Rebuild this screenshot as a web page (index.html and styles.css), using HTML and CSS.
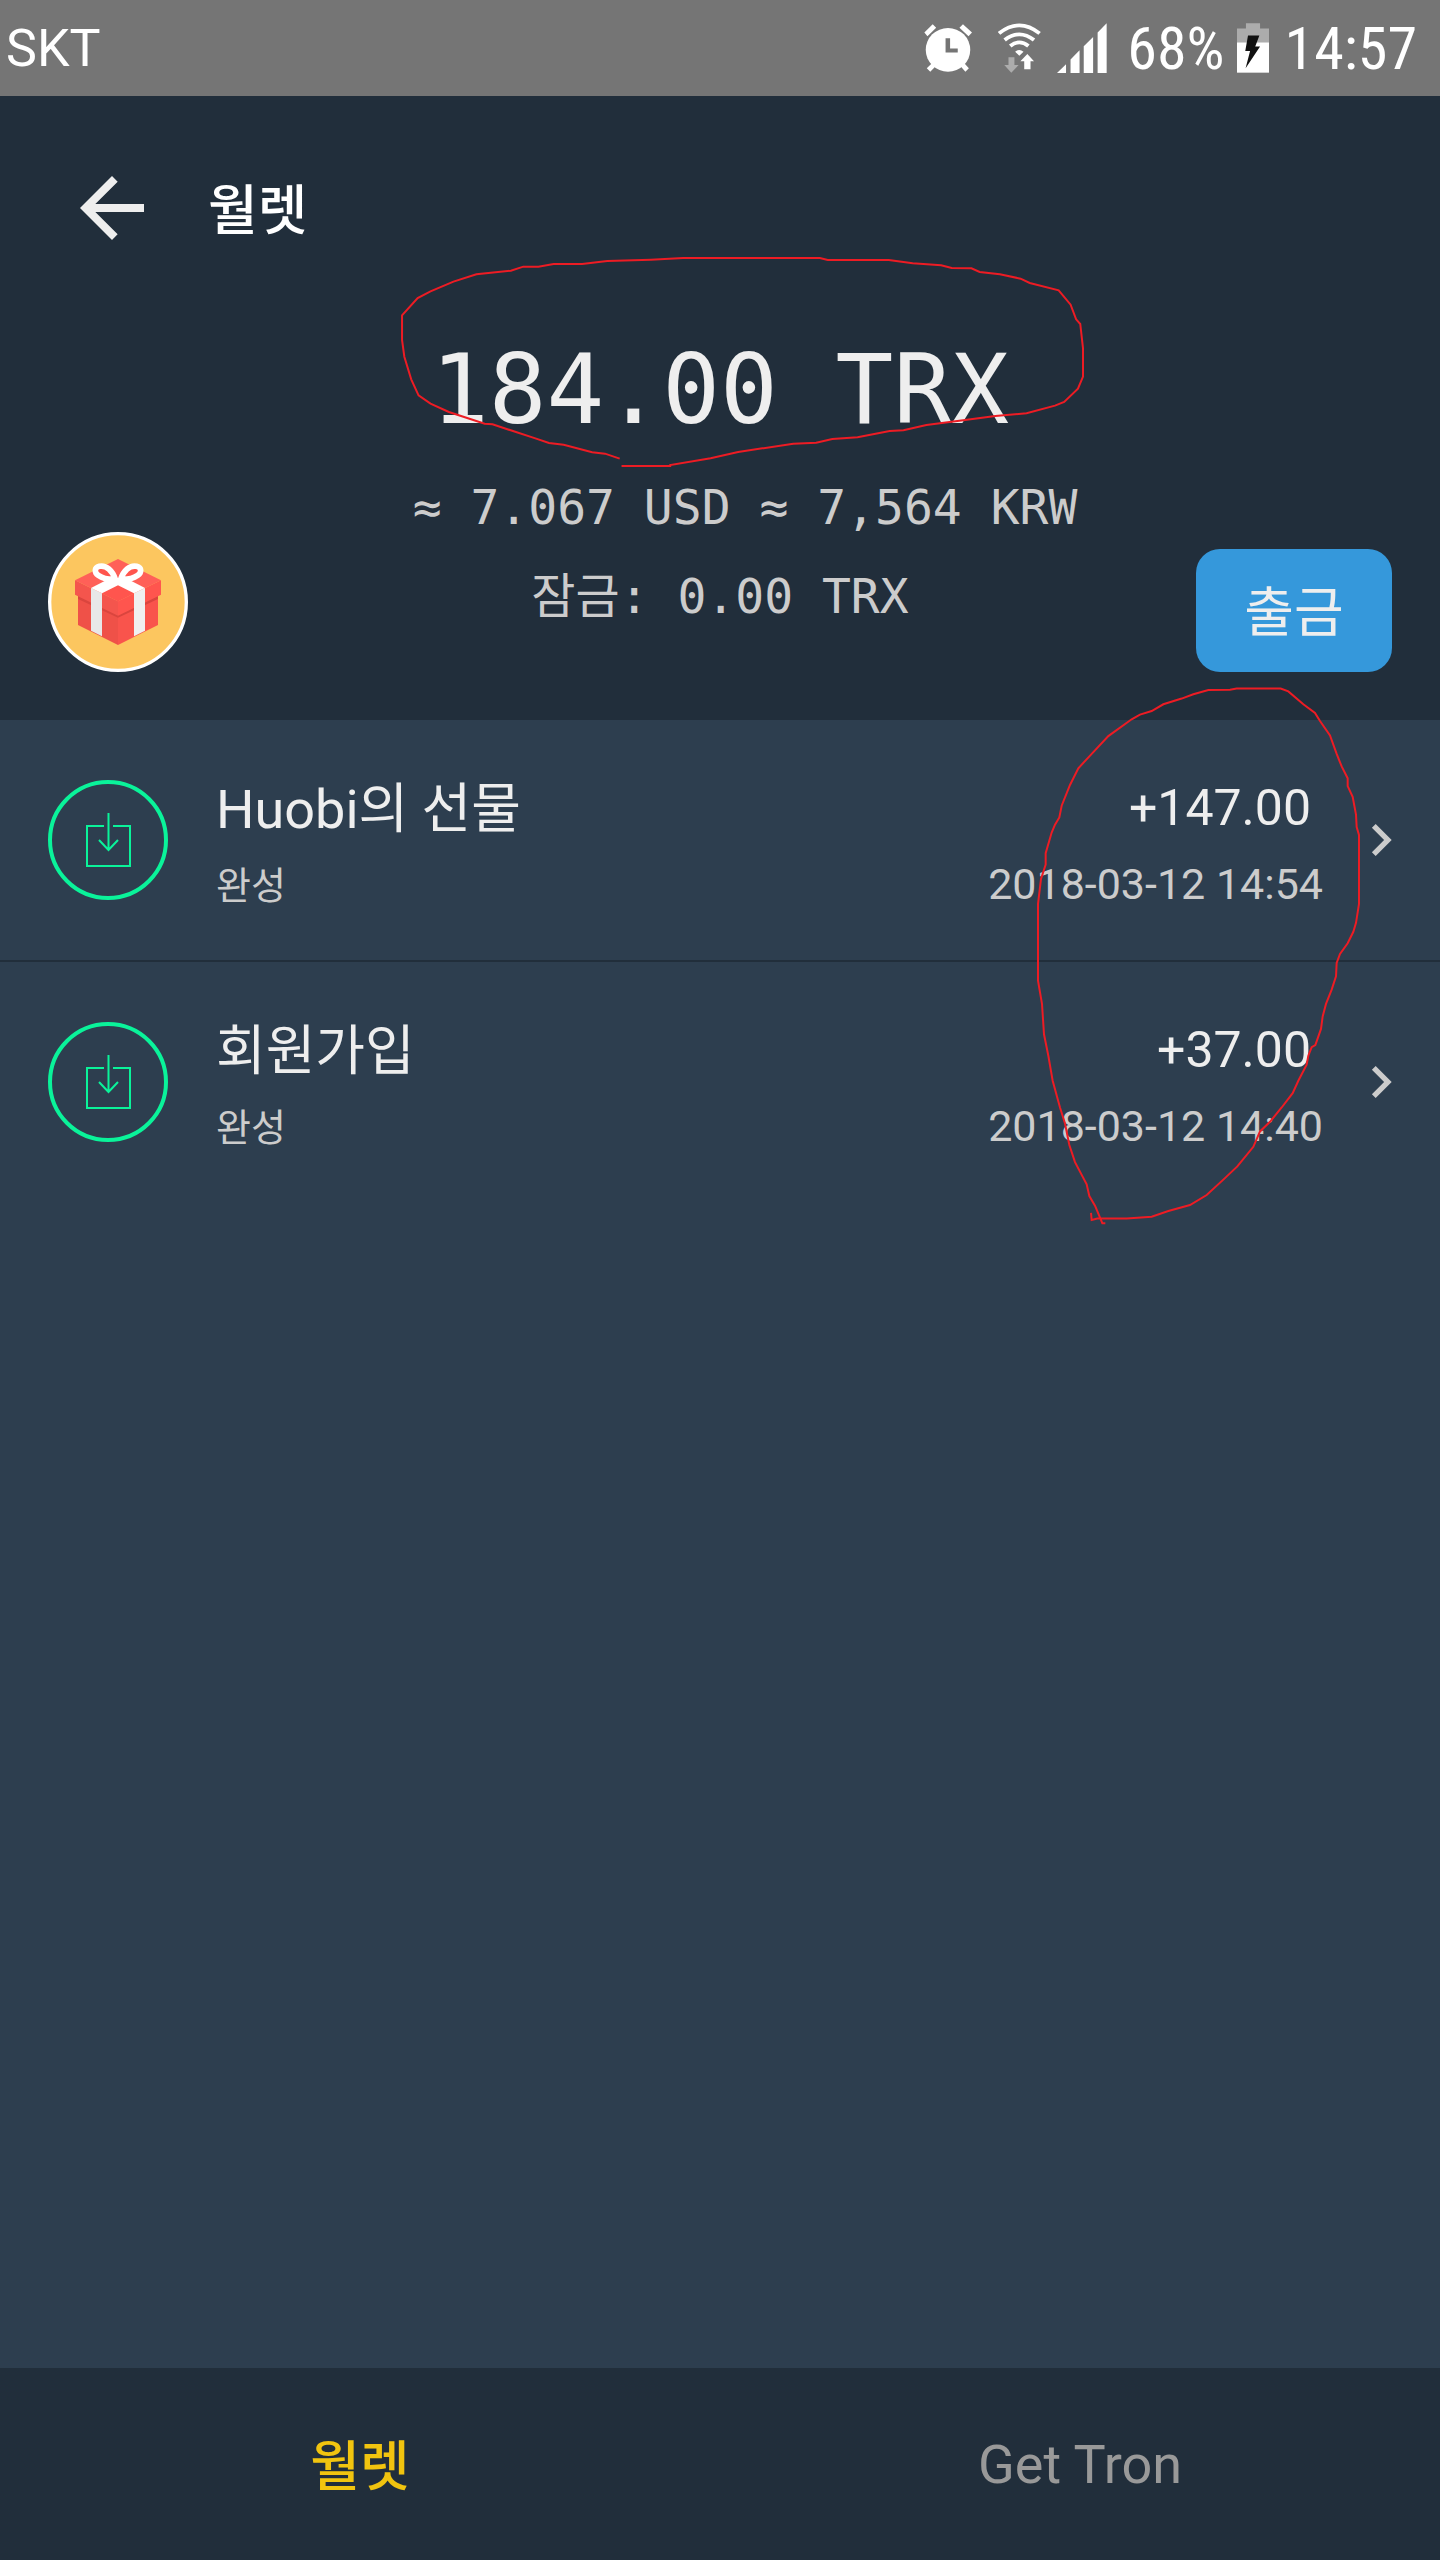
FILE: index.html
```html
<!DOCTYPE html>
<html lang="ko">
<head>
<meta charset="utf-8">
<meta name="viewport" content="width=device-width, initial-scale=1">
<title>월렛</title>
<link rel="stylesheet" href="styles.css">
</head>
<body>
<div class="status-bar">
  <span class="carrier">SKT</span>
  <div class="status-icons">
    <svg class="icon-alarm" viewBox="69 68 138 145" preserveAspectRatio="none" aria-hidden="true">
      <ellipse cx="138" cy="146" rx="64" ry="66" fill="#fff"/>
      <path d="M70 94L94 69L104 79L79 105ZM171 79L181 69L207 94L197 105ZM77 202L94 184L106 192L87 212ZM171 192L183 184L198 202L188 212Z" fill="#fff"/>
      <path d="M131 111H144V142H166V154H131Z" fill="#757575"/>
    </svg>
    <svg class="icon-wifi" viewBox="286 65 123 150" preserveAspectRatio="none" aria-hidden="true">
      <path d="M289 96Q347 48 405 96M305 116Q347 82 389 116M321 134Q347 112 373 134" fill="none" stroke="#fff" stroke-width="11"/>
      <path d="M335 151Q347 141 359 151L347 163ZM370 158L389 180H379V204H361V180H350Z" fill="#fff"/>
      <path d="M316 168H333V191H345L324 214L304 191H316Z" fill="#acacac"/>
    </svg>
    <svg class="icon-signal" viewBox="455 66 144 147" preserveAspectRatio="none" aria-hidden="true">
      <path d="M455 213L481 187V213ZM494 213V173L520 146V213ZM532 213V134L559 107V213ZM572 213V94L598 67V213Z" fill="#fff"/>
    </svg>
    <span class="status-text">68%</span>
    <svg class="icon-battery" viewBox="976 68 93 147" preserveAspectRatio="none" aria-hidden="true">
      <path d="M1002 69H1043V84H1069V125H976V84H1002Z" fill="#acacac"/>
      <path d="M976 125H1069V214H976Z" fill="#fff"/>
      <path d="M1008 105H1041L1029 137H1043L1001 201L1014 150H1000Z" fill="#111"/>
    </svg>
    <span class="status-text">14:57</span>
  </div>
</div>

<header class="wallet-header">
  <div class="toolbar">
    <button class="back" type="button" aria-label="뒤로">
      <svg viewBox="0 0 24 24" aria-hidden="true"><path fill="#eee" d="M20 11H7.83l5.59-5.59L12 4l-8 8 8 8 1.41-1.41L7.83 13H20v-2z"/></svg>
    </button>
    <h1 class="title">월렛</h1>
  </div>
  <p class="balance">184.00 TRX</p>
  <p class="converted">≈ 7.067 USD ≈ 7,564 KRW</p>
  <div class="actions">
    <button class="gift" type="button" aria-label="선물">
      <svg viewBox="54 66 420 420" aria-hidden="true">
        <circle cx="264" cy="276" r="205" fill="#fcc65f" stroke="#fff" stroke-width="10"/>
        <path d="M144 245L264 300V405L144 345Z" fill="#ef5148"/>
        <path d="M384 245L264 300V405L384 345Z" fill="#f9544c"/>
        <path d="M144 256L264 314L384 256V267L264 323L144 267Z" fill="#da453e"/>
        <path d="M264 147L393 211L264 274L135 211Z" fill="#ff6058"/>
        <path d="M135 211L264 274V317L135 254Z" fill="#f4554d"/>
        <path d="M393 211L264 274V317L393 254Z" fill="#ff554e"/>
        <path d="M264 226L312 250L264 274L216 250Z" fill="#ff554e"/>
        <path d="M183 234L216 250V379L183 362Z" fill="#e8e8e8"/>
        <path d="M345 234L312 250V379L345 362Z" fill="#f0f0f0"/>
        <path d="M183 234L240 205H288L345 234L312 250L264 226L216 250Z" fill="#fff"/>
        <path d="M256 208C248 182 228 164 208 169C192 173 193 188 205 196C218 205 238 209 256 208ZM272 208C280 182 300 164 320 169C336 173 335 188 323 196C310 205 290 209 272 208Z" fill="#ff554e" stroke="#fff" stroke-width="17" stroke-linejoin="round"/>
      </svg>
    </button>
    <p class="locked">잠금: 0.00 TRX</p>
    <button class="withdraw" type="button">출금</button>
  </div>
  <svg class="mark mark-balance" viewBox="0 0 1568 1200" preserveAspectRatio="none" aria-hidden="true">
    <path vector-effect="non-scaling-stroke" d="M522 656L490 641L462 637L400 614L368 609L340 596L245 553L228 551L150 516L110 491L84 466L68 418L53 350L48 300V226L82 174L110 154L160 125L210 103L285 92L312 80L345 80L378 72H440L495 63L590 59L660 54H958L975 60H1108L1160 70L1222 76L1245 84L1288 85L1306 96L1350 103L1395 116L1415 129L1478 151L1504 194L1516 238L1525 252L1531 325V410L1520 446L1490 486L1470 497L1408 520L1340 528L1270 541L1190 555L1140 571L1110 573L1040 592L985 597L950 608L900 611L780 636L720 655L632 675V678H526"/>
  </svg>
</header>

<main class="history">
  <ul class="transactions">
    <li>
      <a class="transaction" href="#gift">
        <svg class="deposit" viewBox="0 0 120 120" aria-hidden="true">
          <circle cx="60" cy="60" r="58" stroke-width="4"/>
          <path stroke-width="2" d="M56 46H39V86H82V46H65M60.500 33V70M51 60L60.500 70L70 60"/>
        </svg>
        <span class="details"><span class="name">Huobi의 선물</span><span class="state">완성</span></span>
        <span class="figures"><span class="amount">+147.00</span><time class="date" datetime="2018-03-12T14:54">2018-03-12 14:54</time></span>
        <svg class="chevron" viewBox="0 0 24 24" aria-hidden="true"><path fill="#ccc" d="M10 6L8.590 7.410 13.170 12l-4.580 4.590L10 18l6-6z"/></svg>
      </a>
    </li>
    <li>
      <a class="transaction" href="#signup">
        <svg class="deposit" viewBox="0 0 120 120" aria-hidden="true">
          <circle cx="60" cy="60" r="58" stroke-width="4"/>
          <path stroke-width="2" d="M56 46H39V86H82V46H65M60.500 33V70M51 60L60.500 70L70 60"/>
        </svg>
        <span class="details"><span class="name">회원가입</span><span class="state">완성</span></span>
        <span class="figures"><span class="amount">+37.00</span><time class="date" datetime="2018-03-12T14:40">2018-03-12 14:40</time></span>
        <svg class="chevron" viewBox="0 0 24 24" aria-hidden="true"><path fill="#ccc" d="M10 6L8.590 7.410 13.170 12l-4.580 4.590L10 18l6-6z"/></svg>
      </a>
    </li>
  </ul>
  <svg class="mark mark-history" viewBox="0 0 1440 1568" preserveAspectRatio="none" aria-hidden="true">
    <path vector-effect="non-scaling-stroke" d="M436 1549H427L405 1500L388 1473L380 1440L345 1378L328 1330L315 1270L300 1225L278 1150L265 1080L252 1020L246 935L234 870V655L243 585L257 545V513L275 455L285 433L298 413L305 380L330 322L355 275L400 230L445 185L515 138L540 125L575 115L610 96L665 80L700 68L745 56L810 55L830 52H962L985 60L1030 96L1065 120L1080 143L1110 183L1130 235L1145 270L1163 303V325L1178 355L1188 405L1190 440L1197 462V655L1188 708L1180 733L1163 765L1140 795L1130 820L1128 858L1115 895L1098 935L1088 970L1083 1005L1066 1050L1055 1056L1045 1080L1040 1105L1015 1150L998 1185L965 1225L930 1265L900 1292L880 1335L832 1390L790 1427L740 1470L690 1498L625 1515L575 1531L500 1536H412L395 1540L393 1520"/>
  </svg>
</main>

<nav class="tabs">
  <a class="tab tab-active" href="#wallet" aria-current="page">월렛</a>
  <a class="tab" href="#get-tron">Get Tron</a>
</nav>
</body>
</html>
```

FILE: styles.css
```css
* {
  box-sizing: border-box;
}

body {
  margin: 0;
  min-height: 100vh;
  display: flex;
  flex-direction: column;
  overflow-x: hidden;
  background: #2d3e4f;
  color: #eee;
  font-family: Roboto, "Noto Sans CJK KR", sans-serif;
  font-size: 52px;
}

h1, p, ul {
  margin: 0;
  padding: 0;
  font-weight: 400;
}

button {
  padding: 0;
  border: 0;
  background: none;
  color: inherit;
  font: inherit;
  cursor: pointer;
}

a {
  color: inherit;
  text-decoration: none;
}

svg {
  display: block;
}

.status-bar {
  display: flex;
  align-items: center;
  justify-content: space-between;
  height: 96px;
  padding: 0 23px 0 6px;
  background: #757575;
  color: #fff;
}

.status-icons {
  display: flex;
  align-items: center;
}

.icon-alarm {
  width: 48px;
  height: 48px;
  margin-right: 26px;
}

.icon-wifi {
  width: 43px;
  height: 50px;
  margin-right: 16px;
}

.icon-signal {
  width: 50px;
  height: 50px;
  margin-right: 20px;
}

.icon-battery {
  width: 32px;
  height: 50px;
  margin: 0 16px 0 12px;
}

.status-text {
  padding-top: 2px;
  font-family: "Roboto Condensed", Roboto, sans-serif;
  font-size: 60px;
  line-height: 96px;
}

.wallet-header {
  position: relative;
  padding-bottom: 48px;
  background: #212e3b;
}

.toolbar {
  display: flex;
  align-items: center;
  height: 224px;
  padding-left: 64px;
  gap: 48px;
}

.back,
.back svg {
  width: 96px;
  height: 96px;
}

.title {
  padding-bottom: 4px;
  color: #fff;
  font-size: 54px;
  font-weight: 500;
}

.balance,
.converted,
.locked {
  font-family: "Droid Sans Mono", "DejaVu Sans Mono", "Noto Sans CJK KR", monospace;
  text-align: center;
  white-space: nowrap;
}

.balance {
  padding-top: 2px;
  font-size: 96px;
  line-height: 136px;
}

.converted {
  margin-top: 24px;
  padding-left: 50px;
  color: #ccc;
  font-size: 48px;
  line-height: 50px;
}

.actions {
  display: grid;
  grid-template-columns: 1fr auto 1fr;
  align-items: center;
  padding: 0 48px;
}

.gift,
.gift svg {
  width: 140px;
  height: 140px;
}

.locked {
  padding-bottom: 12px;
  color: #ccc;
  font-size: 48px;
  line-height: 64px;
}

.withdraw {
  justify-self: end;
  align-self: end;
  width: 196px;
  height: 123px;
  padding-bottom: 4px;
  border-radius: 24px;
  background: #3598db;
  font-size: 54px;
}

.mark {
  position: absolute;
  fill: none;
  stroke: #ed1c24;
  stroke-width: 2px;
  pointer-events: none;
}

.mark-balance {
  top: 144px;
  left: 50%;
  width: 720px;
  height: 400px;
  margin-left: -340px;
}

.mark-history {
  top: -50px;
  right: 0;
  width: 480px;
  height: 560px;
}

.history {
  position: relative;
  flex: 1;
}

.transactions {
  list-style: none;
}

.transactions li + li {
  border-top: 2px solid #212e3b;
}

.transaction {
  display: flex;
  align-items: center;
  height: 240px;
  padding: 0 27px 0 48px;
}

.deposit {
  width: 120px;
  height: 120px;
  fill: none;
  stroke: #0af39a;
}

.details,
.figures {
  display: flex;
  flex-direction: column;
  gap: 12px;
  line-height: 64px;
}

.details {
  flex: 1;
  padding: 16px 0 0 48px;
}

.name {
  font-size: 54px;
}

.state {
  color: #ccc;
  font-size: 38px;
}

.figures {
  align-items: flex-end;
  margin-right: 26px;
  padding-top: 12px;
}

.amount {
  padding-right: 12px;
  font-size: 50px;
}

.date {
  color: #ccc;
  font-size: 43px;
}

.chevron {
  width: 64px;
  height: 64px;
}

.tabs {
  display: grid;
  grid-template-columns: 1fr 1fr;
  height: 192px;
  background: #212e3b;
}

.tab {
  display: flex;
  align-items: center;
  justify-content: center;
  color: #999;
  font-size: 54px;
}

.tab-active {
  padding-bottom: 4px;
  color: #f1c40f;
  font-weight: 500;
}
```
